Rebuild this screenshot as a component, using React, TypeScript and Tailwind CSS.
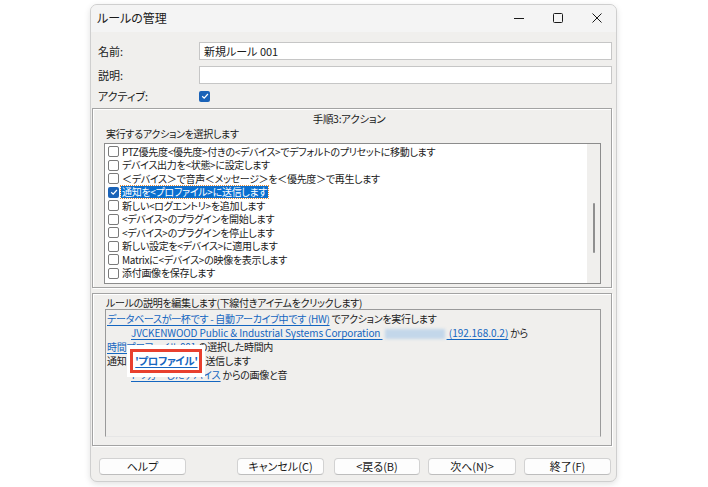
import React from "react";

const ACTIONS = [
  "PTZ優先度<優先度>付きの<デバイス>でデフォルトのプリセットに移動します",
  "デバイス出力を<状態>に設定します",
  "＜デバイス＞で音声＜メッセージ＞を＜優先度＞で再生します",
  "通知を<プロファイル>に送信します",
  "新しい<ログエントリ>を追加します",
  "<デバイス>のプラグインを開始します",
  "<デバイス>のプラグインを停止します",
  "新しい設定を<デバイス>に適用します",
  "Matrixに<デバイス>の映像を表示します",
  "添付画像を保存します",
];

const SELECTED = 3;

function Check({ className = "" }: { className?: string }) {
  return (
    <svg viewBox="0 0 10 10" className={className}>
      <path d="M2.2 5.2 4.2 7.1 7.9 3" fill="none" stroke="white" strokeWidth="1.2" />
    </svg>
  );
}

function Box({ checked }: { checked?: boolean }) {
  if (checked) {
    return (
      <span className="flex h-[11px] w-[11px] shrink-0 items-center justify-center rounded-[2px] bg-[#1a63b8]">
        <Check className="h-[10px] w-[10px]" />
      </span>
    );
  }
  return <span className="h-[11px] w-[11px] shrink-0 rounded-[2px] border border-[#7a7a7a] bg-white" />;
}

function Link({ children, className = "" }: { children: React.ReactNode; className?: string }) {
  return <span className={`text-[#1466c0] underline underline-offset-2 ${className}`}>{children}</span>;
}

function Btn({ label, className = "" }: { label: string; className?: string }) {
  return (
    <button className={`flex h-[17px] items-center justify-center rounded-[4px] border border-[#d2d2d2] border-b-[#bdbdbd] bg-[#fdfdfd] text-[11px] text-[#1a1a1a] ${className}`}>
      {label}
    </button>
  );
}

export default function App() {
  return (
    <div className="flex h-[487px] w-[708px] items-start overflow-hidden bg-white pl-[90px] pt-[4px] font-['Noto_Sans_CJK_JP',sans-serif] [font-feature-settings:'palt'] text-[#1a1a1a]">
      <div className="flex h-[478px] w-[527px] flex-col overflow-hidden rounded-[7px] border border-[#cfcfcf] bg-[#f0efed] shadow-[0_2px_6px_rgba(0,0,0,0.12)]">
        {/* title bar */}
        <div className="flex h-[27px] shrink-0 items-center bg-[#f4f4f4] pb-[2px]">
          <span className="pl-[6px] text-[12px]">ルールの管理</span>
          <div className="ml-auto flex h-full">
            <span className="flex w-[39px] items-center justify-center">
              <svg viewBox="0 0 10 10" className="h-[10px] w-[10px]">
                <path d="M0 5.5h10" stroke="#1a1a1a" strokeWidth="1" />
              </svg>
            </span>
            <span className="flex w-[39px] items-center justify-center">
              <svg viewBox="0 0 10 10" className="h-[10px] w-[10px]">
                <rect x="0.5" y="0.5" width="9" height="9" rx="1" fill="none" stroke="#1a1a1a" strokeWidth="1" />
              </svg>
            </span>
            <span className="flex w-[39px] items-center justify-center">
              <svg viewBox="0 0 10 10" className="h-[10px] w-[10px]">
                <path d="M0.5 0.5 9.5 9.5M9.5 0.5 0.5 9.5" stroke="#1a1a1a" strokeWidth="1" />
              </svg>
            </span>
          </div>
        </div>

        <div className="flex flex-1 flex-col pl-[1px] pr-[4px] pt-[10px] text-[11px]">
          <div className="flex h-[18px] items-center pl-[6px]">
            <span className="w-[101px]">名前:</span>
            <div className="flex h-full flex-1 items-center border border-[#c6c6c6] bg-white pl-[4px]">新規ルール 001</div>
          </div>
          <div className="mt-[6px] flex h-[18px] items-center pl-[6px]">
            <span className="w-[101px]">説明:</span>
            <div className="h-full flex-1 border border-[#c6c6c6] bg-white" />
          </div>
          <div className="mt-[5px] flex h-[14px] items-center pl-[6px]">
            <span className="w-[101px]">アクティブ:</span>
            <Box checked />
          </div>

          {/* actions group */}
          <div className="mt-[5px] flex h-[180px] flex-col border border-[#a3a3a3] pt-[3px] text-[10px] tracking-[-0.3px] shadow-[inset_1px_1px_0_#fff,1px_1px_0_#fff]">
            <div className="flex h-[14px] items-center justify-center pr-[6px] text-[10.5px]">手順3:アクション</div>
            <div className="flex h-[14px] items-center pl-[13px]">実行するアクションを選択します</div>
            <div className="mb-[3px] ml-[11px] mr-[10px] mt-[3px] flex flex-1 border border-[#8c8c8c] bg-white">
              <div className="flex flex-1 flex-col pl-[3px] pt-[1px]">
                {ACTIONS.map((a, i) => (
                  <div key={a} className="flex h-[13.5px] items-center gap-[2px]">
                    <Box checked={i === SELECTED} />
                    <span
                      className={
                        i === SELECTED
                          ? "whitespace-nowrap bg-[#0a6fcf] px-[1px] leading-[12px] text-white outline outline-1 outline-dotted outline-[#e08a3c]"
                          : "whitespace-nowrap px-[1px] leading-[12px]"
                      }
                    >
                      {a}
                    </span>
                  </div>
                ))}
              </div>
              <div className="flex w-[13px] flex-col items-center bg-[#f0efed] pt-[59px]">
                <span className="h-[50px] w-[2px] rounded-full bg-[#8f8f8f]" />
              </div>
            </div>
          </div>

          {/* description group */}
          <div className="mt-[5px] flex h-[153px] flex-col border border-[#a3a3a3] pt-[1px] text-[10px] tracking-[-0.3px] shadow-[inset_1px_1px_0_#fff,1px_1px_0_#fff]">
            <div className="flex h-[14px] items-center pl-[13px]">ルールの説明を編集します(下線付きアイテムをクリックします)</div>
            <div className="mb-[8px] ml-[12px] mr-[10px] flex flex-1 flex-col border border-[#9a9a9a] border-b-[#e6e6e6] pl-[1px] pt-[2px] leading-[14px]">
              <div className="h-[14px] whitespace-nowrap">
                <Link>データベースが一杯です - 自動アーカイブ中です (HW)</Link> でアクションを実行します
              </div>
              <div className="h-[14px] whitespace-nowrap pl-[24px]">
                <Link className="tracking-[-0.1px]">JVCKENWOOD Public &amp; Industrial Systems Corporation </Link>
                <span className="mx-[2px] inline-block h-[10px] w-[60px] bg-[#c3d7ea] align-middle blur-[1.5px]" />
                <Link className="tracking-normal"> (192.168.0.2)</Link> から
              </div>
              <div className="h-[14px] whitespace-nowrap">
                <Link>時間プロファイル 001</Link> の選択した時間内
              </div>
              <div className="flex h-[14px] items-center whitespace-nowrap">
                <span>通知</span>
                <span className="relative z-10 my-[-9px] ml-[1px] flex h-[32px] w-[78px] items-center justify-center bg-white">
                  <span className="flex h-[24px] w-[72px] items-center justify-center border-[3px] border-[#e8402f] text-[10.5px] font-bold">
                    <Link>'プロファイル'</Link>
                  </span>
                </span>
                <span>送信します</span>
              </div>
              <div className="h-[14px] whitespace-nowrap pl-[24px]">
                <Link className="tracking-normal">トリガーしたデバイス</Link> からの画像と音
              </div>
            </div>
          </div>

          {/* buttons */}
          <div className="mt-[12px] flex pl-[7px]">
            <Btn label="ヘルプ" className="w-[87px]" />
            <Btn label="キャンセル(C)" className="ml-[51px] w-[87px]" />
            <Btn label="<戻る(B)" className="ml-[10px] w-[86px]" />
            <Btn label="次へ(N)>" className="ml-[8px] w-[88px]" />
            <Btn label="終了(F)" className="ml-[8px] w-[87px]" />
          </div>
        </div>
      </div>
    </div>
  );
}
